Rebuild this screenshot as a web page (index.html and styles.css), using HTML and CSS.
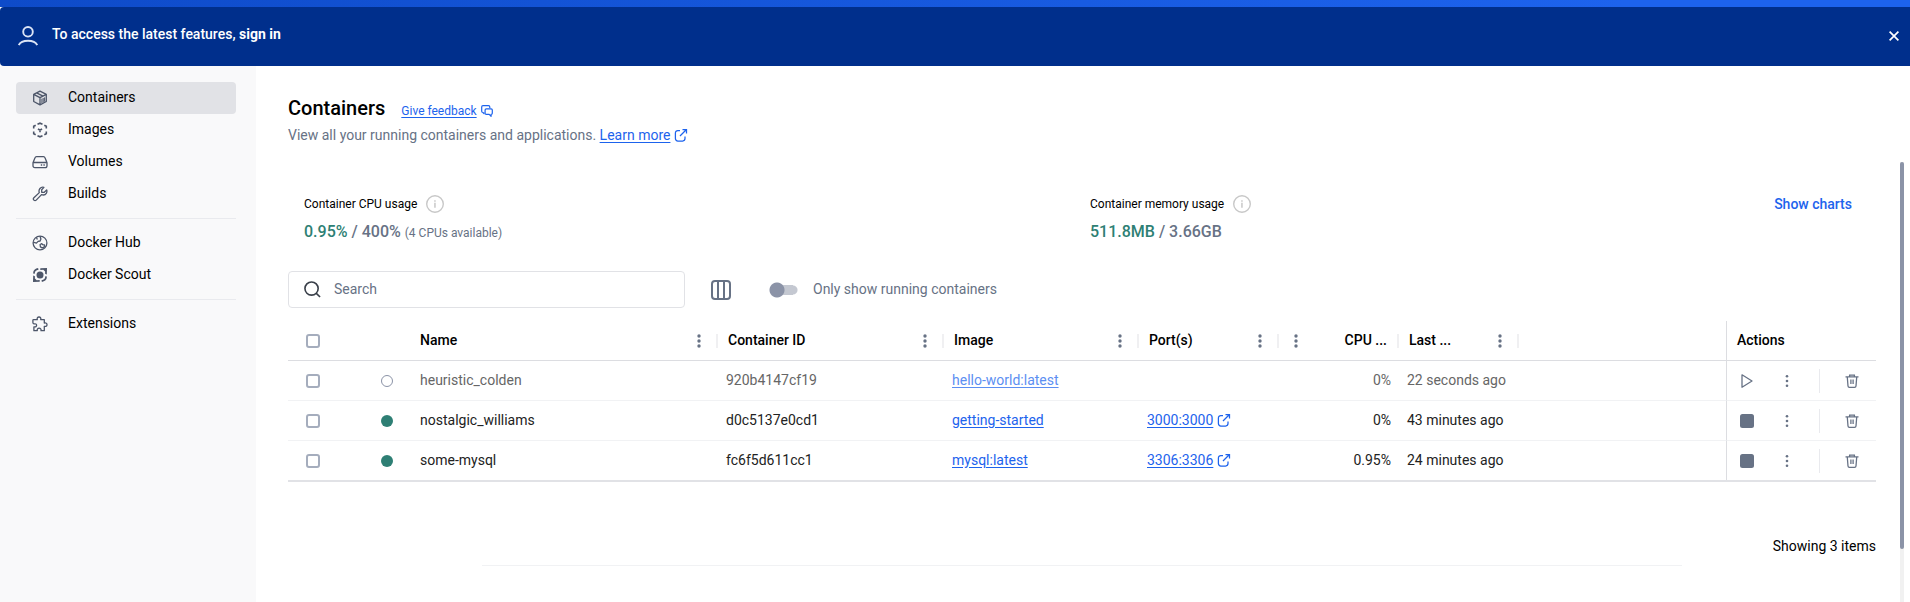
FILE: index.html
```html
<!DOCTYPE html>
<html lang="en">
<head>
<meta charset="utf-8">
<title>Containers</title>
<link rel="stylesheet" href="styles.css">
</head>
<body>
<svg class="sprite" aria-hidden="true">
  <symbol id="external" viewBox="0 0 14 14"><g fill="none" stroke="currentColor" stroke-width="1.250"><path d="M6 2.600H3.800A2.400 2.400 0 0 0 1.400 5V10.600A2.400 2.400 0 0 0 3.800 13H8.600A2.400 2.400 0 0 0 11 10.600V8.500"/><path d="M6 8L12.200 1.800M8.500 1.500h4v4"/></g></symbol>
  <symbol id="kebab" viewBox="0 0 4 14"><circle cx="2" cy="2" r="1.700"/><circle cx="2" cy="7" r="1.700"/><circle cx="2" cy="12" r="1.700"/></symbol>
  <symbol id="kebab-small" viewBox="0 0 4 14"><circle cx="2" cy="2.200" r="1.300"/><circle cx="2" cy="7" r="1.300"/><circle cx="2" cy="11.800" r="1.300"/></symbol>
  <symbol id="trash" viewBox="0 0 14 14"><g fill="none" stroke="currentColor" stroke-width="1.300"><path d="M.5 2.800h13M4 1.200h6M4.600 1v1.800M9.400 1v1.800M2.300 3.300l.7 8.700q.1 1.300 1.400 1.300h5.200q1.300 0 1.400-1.300l.7-8.700M5.900 5.500v4.500M8.100 5.500v4.500"/></g></symbol>
  <symbol id="info" viewBox="0 0 18 18"><circle cx="9" cy="9" r="8.300" fill="none" stroke="currentColor" stroke-width="1.400"/><path d="M8.200 5.200h1.500v1.500H8.200zM8.200 7.800h1.500v5H8.200z"/></symbol>
  <symbol id="stop" viewBox="0 0 14 14"><rect width="14" height="14" rx="2.500"/></symbol>
</svg>

<div class="titlebar"></div>
<div class="banner">
  <svg class="banner-user" viewBox="0 0 20 20" fill="none" stroke="currentColor" stroke-width="1.900"><circle cx="10" cy="5.800" r="4.800"/><path d="M.8 19C2.200 16 6 14.700 10 14.700s7.800 1.300 9.200 4.300"/></svg>
  <p class="banner-text">To access the latest features, <a href="#">sign in</a></p>
  <button class="banner-close" aria-label="Close"><svg viewBox="0 0 10 10" fill="none" stroke="currentColor" stroke-width="1.700"><path d="M.6.6l8.800 8.800M9.400.6L.6 9.400"/></svg></button>
</div>

<div class="app">
  <nav class="sidebar">
    <a class="nav-item active" href="#"><svg viewBox="0 0 16 16" fill="none" stroke="currentColor" stroke-width="1.300" stroke-linejoin="round"><path d="M8 1.200l6.300 3.100v7.200L8 14.900l-6.300-3.400V4.300zM1.700 4.400L8 7.600l6.300-3.200M8 7.600v7.300M4.600 2.900L11 6.100"/><path d="M9.900 8.700v4.300M11.200 8v4.300M12.600 7.400v4.300" stroke-width="1"/></svg><span>Containers</span></a>
    <a class="nav-item" href="#"><svg viewBox="0 0 16 16" fill="none" stroke="currentColor" stroke-width="1.600"><path d="M5.500 2.300L8 1.200l2.500 1.100M12.300 3.200l2 1.100v2.200M14.300 9.500v2.200l-2 1.100M10.500 13.700L8 14.800l-2.500-1.100M3.700 12.800l-2-1.100V9.500M1.700 6.500V4.300l2-1.100M5.900 7L8 8l2.100-1M8 8v2.200"/></svg><span>Images</span></a>
    <a class="nav-item" href="#"><svg viewBox="0 0 16 16" fill="none" stroke="currentColor" stroke-width="1.300" stroke-linejoin="round"><path d="M1 8.700L3 3.800Q3.400 2.700 4.500 2.700h7q1.100 0 1.500 1.100l2 4.900v3q0 1.900-1.900 1.900H2.900Q1 13.600 1 11.700zM1.200 8.500h13.600"/><path d="M8.800 11h1.400M11.400 11h1.400" stroke-width="1.500"/></svg><span>Volumes</span></a>
    <a class="nav-item" href="#"><svg viewBox="0 0 16 16" fill="none" stroke="currentColor" stroke-width="1.300" stroke-linejoin="round"><path d="M11.900 1.400L9.700 3.700v2.600h2.600l2.400-2.400c.8 2.500-.8 5-3.300 5.100-.8 0-1.300-.2-1.900-.4L4.200 14.100a1.600 1.600 0 0 1-2.300-2.300L7.300 6.600C6.200 3.600 8.700.4 11.900 1.400z"/></svg><span>Builds</span></a>
    <hr class="nav-rule">
    <a class="nav-item" href="#"><svg viewBox="0 0 16 16" fill="none" stroke="currentColor" stroke-width="1.300" stroke-linejoin="round"><circle cx="8" cy="8" r="6.900"/><path d="M1.200 7.200l3.200.9 1.700-1.700 2-.4.800-2L8 1.300M4.300 2.200l1.100 2.300M8.100 9.500l1.700-.8.900 1 1.800.2-.3 2.200-2 .8-1.800-1z"/></svg><span>Docker Hub</span></a>
    <a class="nav-item" href="#"><svg viewBox="0 0 16 16" fill="none" stroke="currentColor" stroke-width="1.700"><circle cx="8" cy="8" r="3.500" fill="currentColor" stroke="none"/><path d="M1.900 6.600Q2 4 3.200 3.200T6.300 1.900M14.100 9.400q-.1 2.600-1.300 3.400t-3.100 1.300"/><path d="M8.300 1.200L15 1l-.2 6.600-1.700-.9V4.500l-1.800-1.700-3 .1zM7.700 14.800L1 15l.2-6.600 1.700.9v2.200l1.800 1.700 3-.1z" fill="currentColor" stroke="none"/></svg><span>Docker Scout</span></a>
    <hr class="nav-rule">
    <a class="nav-item" href="#"><svg viewBox="0 0 16 16" fill="none" stroke="currentColor" stroke-width="1.300" stroke-linejoin="round"><path d="M2.400 3.700h2.900C4.800 2 5.700 1 7 1s2.200 1 1.700 2.700h3.600v3.400c1.700-.5 2.700.3 2.700 1.600s-1 2.100-2.700 1.600v4.400H9c.4-1.600-.6-2.500-1.900-2.500s-2.200.9-1.800 2.500H1.900v-3.900c1.900.4 2.700-.4 2.700-1.500S3.700 7.500 1.900 7.900c-1-.2-1-.7-1-1.400V4.300q0-.6.600-.6z"/></svg><span>Extensions</span></a>
  </nav>

  <main class="main">
    <header class="page-head">
      <div class="title-row">
        <h1>Containers</h1>
        <a class="link feedback" href="#"><span>Give feedback</span><svg viewBox="0 0 12 12" fill="none" stroke="currentColor" stroke-width="1.200" stroke-linejoin="round"><path d="M3 7.500v1.200L1.900 7.500Q.7 7.400.7 6.200V2Q.7.700 2 .7h5.500Q8.800.7 8.800 2v1"/><path d="M5.300 3.800h4.800q1.200 0 1.200 1.200v3.200q0 1.200-1.200 1.200v1.900L8.200 9.400H5.300Q4.100 9.400 4.100 8.200V5q0-1.200 1.200-1.200z"/></svg></a>
      </div>
      <p class="lead">View all your running containers and applications. <a class="link" href="#"><span>Learn more</span><svg class="ext"><use href="#external"/></svg></a></p>
    </header>

    <section class="usage">
      <div class="metric">
        <h2>Container CPU usage <svg><use href="#info"/></svg></h2>
        <p><b>0.95%</b> / 400% <small>(4 CPUs available)</small></p>
      </div>
      <div class="metric">
        <h2>Container memory usage <svg><use href="#info"/></svg></h2>
        <p><b>511.8MB</b> / 3.66GB</p>
      </div>
      <button class="show-charts">Show charts</button>
    </section>

    <div class="toolbar">
      <label class="search">
        <svg viewBox="0 0 18 18" fill="none" stroke="currentColor" stroke-width="1.700"><circle cx="8" cy="8" r="7"/><path d="M12.800 12.800l4.200 4.200"/></svg>
        <input type="text" placeholder="Search" aria-label="Search">
      </label>
      <button class="columns" aria-label="Columns"><svg viewBox="0 0 20 20" fill="none" stroke="currentColor" stroke-width="2"><rect x="1" y="1" width="18" height="18" rx="3"/><path d="M7 1v18M13 1v18"/></svg></button>
      <label class="toggle"><input type="checkbox" role="switch"><span>Only show running containers</span></label>
    </div>

    <table class="grid">
      <colgroup><col class="c-check"><col class="c-status"><col class="c-name"><col class="c-id"><col class="c-image"><col class="c-port"><col class="c-cpu"><col class="c-last"><col><col class="c-actions"></colgroup>
      <thead>
        <tr>
          <th class="check"><input type="checkbox" aria-label="Select all"></th>
          <th></th>
          <th><div class="th"><span>Name</span><svg><use href="#kebab"/></svg></div></th>
          <th><div class="th"><span>Container ID</span><svg><use href="#kebab"/></svg></div></th>
          <th><div class="th"><span>Image</span><svg><use href="#kebab"/></svg></div></th>
          <th><div class="th"><span>Port(s)</span><svg><use href="#kebab"/></svg></div></th>
          <th><div class="th reverse"><span>CPU ...</span><svg><use href="#kebab"/></svg></div></th>
          <th><div class="th"><span>Last ...</span><svg><use href="#kebab"/></svg></div></th>
          <th></th>
          <th class="actions-head">Actions</th>
        </tr>
      </thead>
      <tbody>
        <tr class="stopped">
          <td class="check"><input type="checkbox" aria-label="Select heuristic_colden"></td>
          <td class="status"><i class="dot"></i></td>
          <td class="name">heuristic_colden</td>
          <td>920b4147cf19</td>
          <td><a class="link" href="#"><span>hello-world:latest</span></a></td>
          <td></td>
          <td class="num">0%</td>
          <td>22 seconds ago</td>
          <td></td>
          <td class="actions"><div><button aria-label="Start"><svg viewBox="0 0 14 14" fill="none" stroke="currentColor" stroke-width="1.300" stroke-linejoin="round"><path d="M2 .8L12 7 2 13.200z"/></svg></button><button aria-label="More"><svg><use href="#kebab-small"/></svg></button><button class="delete" aria-label="Delete"><svg><use href="#trash"/></svg></button></div></td>
        </tr>
        <tr>
          <td class="check"><input type="checkbox" aria-label="Select nostalgic_williams"></td>
          <td class="status"><i class="dot on"></i></td>
          <td class="name">nostalgic_williams</td>
          <td>d0c5137e0cd1</td>
          <td><a class="link" href="#"><span>getting-started</span></a></td>
          <td><a class="link" href="#"><span>3000:3000</span><svg class="ext"><use href="#external"/></svg></a></td>
          <td class="num">0%</td>
          <td>43 minutes ago</td>
          <td></td>
          <td class="actions"><div><button aria-label="Stop"><svg><use href="#stop"/></svg></button><button aria-label="More"><svg><use href="#kebab-small"/></svg></button><button class="delete" aria-label="Delete"><svg><use href="#trash"/></svg></button></div></td>
        </tr>
        <tr>
          <td class="check"><input type="checkbox" aria-label="Select some-mysql"></td>
          <td class="status"><i class="dot on"></i></td>
          <td class="name">some-mysql</td>
          <td>fc6f5d611cc1</td>
          <td><a class="link" href="#"><span>mysql:latest</span></a></td>
          <td><a class="link" href="#"><span>3306:3306</span><svg class="ext"><use href="#external"/></svg></a></td>
          <td class="num">0.95%</td>
          <td>24 minutes ago</td>
          <td></td>
          <td class="actions"><div><button aria-label="Stop"><svg><use href="#stop"/></svg></button><button aria-label="More"><svg><use href="#kebab-small"/></svg></button><button class="delete" aria-label="Delete"><svg><use href="#trash"/></svg></button></div></td>
        </tr>
      </tbody>
    </table>

    <p class="count">Showing 3 items</p>
    <hr class="end-rule">
  </main>
  <div class="scroll-track"><div class="scroll-thumb"></div></div>
</div>
</body>
</html>
```

FILE: styles.css
```css
* { box-sizing: border-box; }
body {
  margin: 0;
  min-height: 100vh;
  display: flex;
  flex-direction: column;
  font: 14px/20px Roboto, "Liberation Sans", sans-serif;
  color: #000;
  background: #fff;
}
h1, h2, p { margin: 0; }
hr { border: 0; height: 1px; }
svg { display: block; flex: none; fill: currentColor; }
svg[fill="none"] { fill: none; }
button { border: 0; padding: 0; background: none; font: inherit; color: inherit; display: flex; align-items: center; justify-content: center; }
.sprite { position: absolute; width: 0; height: 0; }

.titlebar { height: 7px; background: linear-gradient(90deg, #0e4bc9, #1d63ed 85%); }
.banner {
  display: flex;
  align-items: center;
  padding: 0 11px 2px 18px;
  height: 59px;
  border-radius: 4px 0 0 4px;
  background: #002f8c;
  color: #fff;
}
.banner-user { width: 20px; height: 20px; color: #dbe4f5; }
.banner-text { margin: 0 auto 4px 14px; font-weight: 500; }
.banner-text a { color: inherit; font-weight: 700; text-decoration: none; }
.banner-close svg { width: 10px; height: 10px; }

.app { flex: 1; display: flex; }
.sidebar { width: 256px; flex: none; padding: 16px 20px 0 16px; background: #f9f9fa; }
.nav-item {
  display: flex;
  align-items: center;
  gap: 20px;
  height: 32px;
  padding-left: 16px;
  border-radius: 4px;
  color: #000;
  text-decoration: none;
}
.nav-item span { padding-bottom: 2px; }
.nav-item svg { width: 16px; height: 16px; color: #4d5669; }
.nav-item.active { background: #e1e2e6; }
.nav-rule { margin: 8px 0; background: #e9eaee; }

.main { flex: 1; min-width: 0; padding: 30px 24px 0 32px; }
.title-row { display: flex; align-items: baseline; gap: 16px; }
h1 { font-size: 20px; line-height: 24px; font-weight: 500; }
.link { display: inline-flex; align-items: center; gap: 4px; color: #1d63ed; text-decoration: none; }
.link span { text-decoration: underline; text-underline-offset: 2px; }
.feedback { font-size: 12px; }
.feedback svg { width: 12px; height: 12px; }
.ext { width: 14px; height: 14px; }
.lead { margin-top: 4px; color: #677285; }

.usage { display: flex; align-items: flex-start; gap: 12px; padding: 49px 24px 0 16px; }
.metric:first-child { width: 50%; }
.metric:nth-child(2) { flex: 1; }
.metric h2 { display: flex; align-items: center; gap: 9px; font-size: 12px; line-height: 20px; font-weight: 400; }
.metric svg { width: 18px; height: 18px; color: #c8c8c8; }
.metric p { margin-top: 6px; font-size: 16px; font-weight: 500; line-height: 24px; color: #677285; }
.metric b { font-weight: 500; color: #2e7f74; }
.metric small { font-size: 12px; font-weight: 400; }
.show-charts { color: #1d63ed; font-weight: 500; }

.toolbar { display: flex; align-items: center; margin-top: 26px; }
.search { display: flex; align-items: center; gap: 13px; width: 25%; height: 37px; padding: 0 15px; border: 1px solid #e1e2e6; border-radius: 4px; }
.search svg { width: 17px; height: 17px; color: #393f49; }
.search input { flex: 1; min-width: 0; border: 0; padding: 0 0 2px; outline: 0; background: none; font: inherit; color: #000; }
.search input::placeholder { color: #677285; opacity: 1; }
.columns { margin-left: 26px; color: #677285; }
.columns svg { width: 20px; height: 20px; }
.toggle { display: flex; align-items: center; gap: 15px; margin-left: 38px; color: #677285; }
.toggle span { padding-bottom: 2px; }
.toggle input {
  appearance: none;
  width: 29px;
  height: 16px;
  margin: 0;
  background:
    radial-gradient(circle at 8px 8px, #8b93a7 0 7px, transparent 8px),
    linear-gradient(#c4c8d1, #c4c8d1) 8px 3px / 16px 10px no-repeat,
    radial-gradient(circle at 24px 8px, #c4c8d1 0 4px, transparent 5px);
}

.grid { width: 100%; margin-top: 13px; table-layout: fixed; border-collapse: separate; border-spacing: 0; border-bottom: 2px solid #e1e2e6; }
.c-check { width: 50px; }
.c-status { width: 72px; }
.c-name { width: 308px; }
.c-id { width: 226px; }
.c-image { width: 195px; }
.c-port { width: 140px; }
.c-cpu, .c-last { width: 120px; }
.c-actions { width: 150px; }
.grid th { height: 40px; padding: 0; border-bottom: 1px solid #dcdde1; font-weight: 500; text-align: left; }
.th { display: flex; align-items: center; justify-content: space-between; height: 14px; padding: 0 15px 0 10px; border-right: 2px solid #f0f0f2; }
.th span { padding-bottom: 2px; }
.th svg { width: 4px; height: 14px; color: #677285; }
.th.reverse { flex-direction: row-reverse; padding: 0 10px 0 15px; }
.grid td { height: 40px; padding: 0 8px 2px; border-bottom: 1px solid #f1f2f4; color: #222; }
.grid tbody tr:last-child td { height: 39px; border-bottom: 0; }
.grid .name { padding-left: 10px; }
.grid .stopped td { color: #666; }
.grid .stopped .link { color: #5c8ff2; }
.grid .num { text-align: right; }
.grid .check, .grid .status { padding: 0; }
.check input { display: block; appearance: none; width: 14px; height: 14px; margin: 0 auto; border: 2px solid #a5adbd; border-radius: 3px; background: #fff; }
.dot { display: block; width: 12px; height: 12px; margin-left: 43px; border: 1px solid #8b93a7; border-radius: 50%; }
.dot.on { border: 0; background: #2e7f74; }
.grid .actions-head { padding: 0 0 2px 10px; border-left: 1px solid #dcdde1; }
.grid .actions { padding: 0; border-left: 1px solid #dcdde1; color: #677285; }
.grid .stopped .actions { color: #677285; }
.actions div { display: grid; grid-template-columns: 40px 40px 1fr; height: 24px; }
.actions svg { width: 14px; height: 14px; }
.actions .delete { margin-left: 12px; border-left: 1px solid #e9eaee; padding-left: 8px; }

.count { margin-top: 54px; text-align: right; }
.end-rule { max-width: 1200px; margin: 9px auto 0; background: #f1f2f4; }

.scroll-track { width: 4px; flex: none; margin: 96px 6px 0 0; background: #f1f1f1; }
.scroll-thumb { height: 88%; border-radius: 2px; background: #8b93a7; }
```
